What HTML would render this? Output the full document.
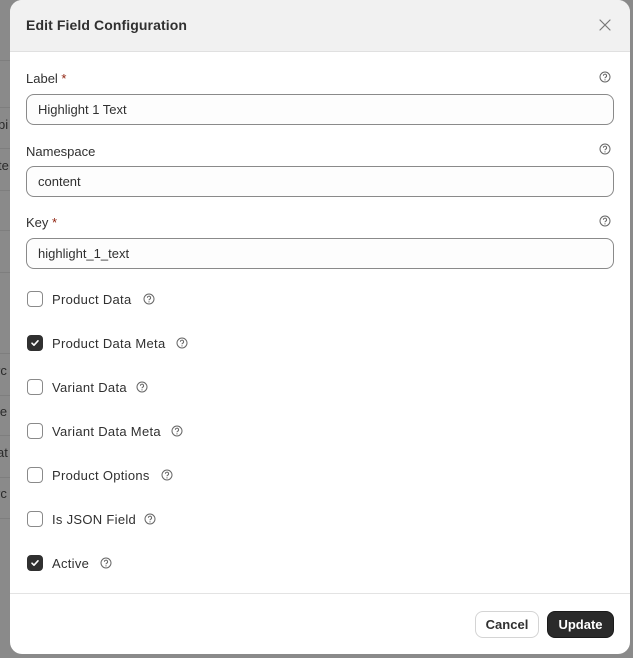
<!DOCTYPE html>
<html><head><meta charset="utf-8"><style>
*{box-sizing:border-box;margin:0;padding:0}
body{width:633px;height:658px;background:#8a8a8a;font-family:"Liberation Sans",sans-serif;position:relative;overflow:hidden;color:#303030}
.bgl{position:absolute;left:0;width:10px;height:1px;background:#7e7e7e}
.bgt{position:absolute;left:0;font-size:13px;color:#2a2a2a}
.modal{position:absolute;left:10px;top:0;width:620px;height:654px;background:#fff;border-radius:12px;overflow:hidden}
.hd{height:52px;background:#f1f1f1;border-bottom:1px solid #e0e0e0;position:relative}
.hd h1{position:absolute;left:16px;top:17px;font-size:14px;font-weight:bold;color:#303030;letter-spacing:.1px}
.x{position:absolute;right:18px;top:18px}
.lbl{position:absolute;left:16px;font-size:13px;color:#303030}
.lbl b{color:#8e1f0b;font-weight:normal}
.inp{position:absolute;left:16px;width:588px;height:31px;border:1px solid #8a8a8a;border-radius:8px;background:#fdfdfd;font-size:13px;padding:7px 11px;color:#303030}
.hq{position:absolute}
.cb{position:absolute;left:17px;width:16px;height:16px;border:1px solid #8a8a8a;border-radius:4px;background:#fff}
.cb.on{background:#303030;border-color:#303030}
.cbl{position:absolute;left:42px;font-size:13px;color:#303030;letter-spacing:.3px}
.ft{position:absolute;left:0;top:593px;width:620px;border-top:1px solid #e3e3e3}
.btn{position:absolute;top:611px;height:27px;border-radius:8px;font-size:13px;font-weight:bold;text-align:center;line-height:26px}
</style></head><body>
<div class="bgl" style="top:60px"></div><div class="bgl" style="top:107px"></div><div class="bgl" style="top:148px"></div><div class="bgl" style="top:190px"></div><div class="bgl" style="top:230px"></div><div class="bgl" style="top:272px"></div><div class="bgl" style="top:353px"></div><div class="bgl" style="top:395px"></div><div class="bgl" style="top:435px"></div><div class="bgl" style="top:477px"></div><div class="bgl" style="top:518px"></div>
<div class="bgt" style="top:117px;left:-2px">bi</div><div class="bgt" style="top:158px;left:-2px">te</div><div class="bgt" style="top:363px;left:-4px">rc</div><div class="bgt" style="top:404px;left:-3px">le</div><div class="bgt" style="top:445px;left:-3px">at</div><div class="bgt" style="top:486px;left:-4px">rc</div>
<div class="modal">
<div class="hd"><h1>Edit Field Configuration</h1>
<svg class="x" width="14" height="14" viewBox="0 0 14 14"><path d="M2 2L12 12M12 2L2 12" stroke="#777" stroke-width="1.2" stroke-linecap="round"/></svg></div>

<div class="lbl" style="top:71px">Label <b>*</b></div>
<div class="inp" style="top:94px">Highlight 1 Text</div>
<div class="lbl" style="top:144px">Namespace</div>
<div class="inp" style="top:166px">content</div>
<div class="lbl" style="top:215px">Key <b>*</b></div>
<div class="inp" style="top:238px">highlight_1_text</div>

<svg width="0" height="0" style="position:absolute"><defs><g id="q"><circle cx="6" cy="6" r="5" fill="none" stroke="#666" stroke-width="1"/><path d="M4.4 4.8a1.6 1.6 0 1 1 2.3 1.4c-.5.3-.7.6-.7 1.1" fill="none" stroke="#666" stroke-width="1"/><circle cx="6" cy="8.9" r=".6" fill="#666"/></g></defs></svg>
<svg class="hq" style="left:589px;top:71px" width="12" height="12"><use href="#q"/></svg>
<svg class="hq" style="left:589px;top:143px" width="12" height="12"><use href="#q"/></svg>
<svg class="hq" style="left:589px;top:215px" width="12" height="12"><use href="#q"/></svg>

<div class="cb" style="top:291px"></div><div class="cbl" style="top:292px">Product Data</div><svg class="hq" style="left:133px;top:293px" width="12" height="12"><use href="#q"/></svg>
<div class="cb on" style="top:335px"><svg width="14" height="14" viewBox="0 0 14 14"><path d="M4 7.2l2 2 4-4.4" fill="none" stroke="#fff" stroke-width="1.6" stroke-linecap="round" stroke-linejoin="round"/></svg></div><div class="cbl" style="top:336px">Product Data Meta</div><svg class="hq" style="left:166px;top:337px" width="12" height="12"><use href="#q"/></svg>
<div class="cb" style="top:379px"></div><div class="cbl" style="top:380px">Variant Data</div><svg class="hq" style="left:126px;top:381px" width="12" height="12"><use href="#q"/></svg>
<div class="cb" style="top:423px"></div><div class="cbl" style="top:424px">Variant Data Meta</div><svg class="hq" style="left:161px;top:425px" width="12" height="12"><use href="#q"/></svg>
<div class="cb" style="top:467px"></div><div class="cbl" style="top:468px">Product Options</div><svg class="hq" style="left:151px;top:469px" width="12" height="12"><use href="#q"/></svg>
<div class="cb" style="top:511px"></div><div class="cbl" style="top:512px">Is JSON Field</div><svg class="hq" style="left:134px;top:513px" width="12" height="12"><use href="#q"/></svg>
<div class="cb on" style="top:555px"><svg width="14" height="14" viewBox="0 0 14 14"><path d="M4 7.2l2 2 4-4.4" fill="none" stroke="#fff" stroke-width="1.6" stroke-linecap="round" stroke-linejoin="round"/></svg></div><div class="cbl" style="top:556px">Active</div><svg class="hq" style="left:90px;top:557px" width="12" height="12"><use href="#q"/></svg>

<div class="ft"></div>
<div class="btn" style="left:465px;width:64px;border:1px solid #d4d4d4;background:#fff;color:#303030">Cancel</div>
<div class="btn" style="left:537px;width:67px;background:#2a2a2a;color:#fff;border:1px solid #1a1a1a">Update</div>
</div>
</body></html>
